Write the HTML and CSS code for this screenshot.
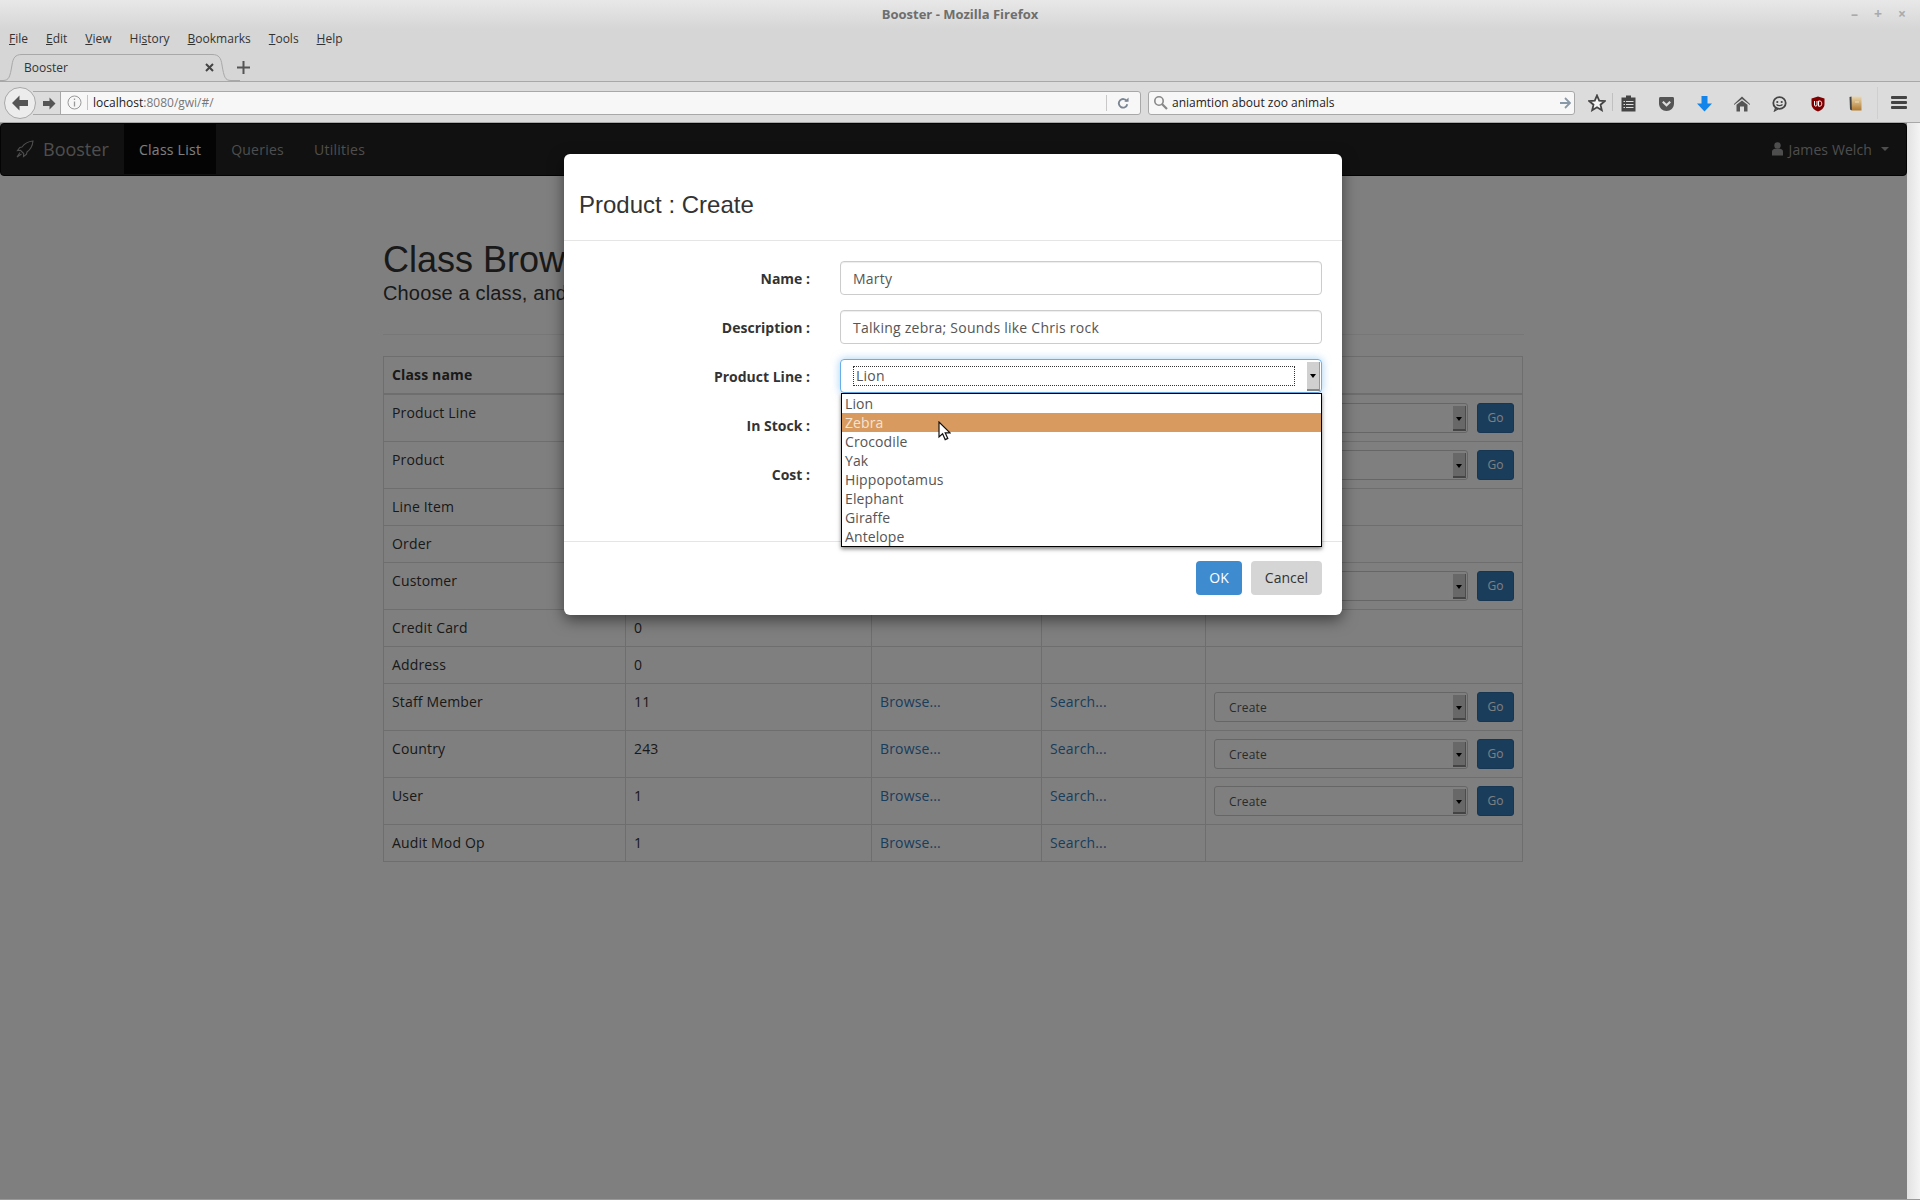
FILE: index.html
```html
<!DOCTYPE html>
<html>
<head>
  <title>Booster - Mozilla Firefox</title>
  <link rel="stylesheet" href="styles.css">
</head>
<body>

  <div class="titlebar">
    <span class="title">Booster - Mozilla Firefox</span>
    <div class="winbtns"><span>&#8211;</span><span>+</span><span>&#215;</span></div>
  </div>

  <div class="menubar">
    <span><u>F</u>ile</span>
    <span><u>E</u>dit</span>
    <span><u>V</u>iew</span>
    <span>Hi<u>s</u>tory</span>
    <span><u>B</u>ookmarks</span>
    <span><u>T</u>ools</span>
    <span><u>H</u>elp</span>
  </div>

  <div class="tabbar">
    <div class="tab">
      <svg class="tabshape" width="240" height="29" viewBox="0 0 240 29"><path d="M0 27.5H3C9 27.5 10 24 12 12C13 5 15 1.5 22 1.5H212C219 1.5 221 5 222 12C224 24 225 27.5 231 27.5H240" fill="none" stroke="#a8a8a8" stroke-width="1"/></svg>
      <span class="tabtext">Booster</span>
      <svg class="tabclose" width="9" height="9" viewBox="0 0 9 9"><path d="M1 1L8 8M8 1L1 8" stroke="#444" stroke-width="2"/></svg>
    </div>
    <svg class="newtab" width="13" height="13" viewBox="0 0 13 13"><path d="M6.5 0V13M0 6.5H13" stroke="#555" stroke-width="2"/></svg>
  </div>

  <div class="toolbar">
    <div class="backbtn"><svg width="20" height="18" viewBox="0 0 20 18"><path d="M9.5 1.5L2 9L9.5 16.5V12H18V6H9.5Z" fill="#555"/></svg></div>
    <div class="fwdbtn"><svg width="14" height="13" viewBox="0 0 14 13"><path d="M7.5 0.5L13.5 6.5L7.5 12.5V9H1V4H7.5Z" fill="#555"/></svg></div>
    <div class="urlbar">
      <svg class="infoicon" width="15" height="15" viewBox="0 0 15 15"><circle cx="7.5" cy="7.5" r="6.5" fill="none" stroke="#999"/><path d="M7.5 6.5V11.5M7.5 3.5V5" stroke="#999" stroke-width="1.3"/></svg>
      <span class="urlsep"></span>
      <span class="url">localhost<span class="urlrest">:8080/gwi/#/</span></span>
      <span class="urlsep2"></span>
      <svg class="reload" width="12" height="12" viewBox="0 0 14 14"><path d="M11.5 5A5 5 0 1 0 12 8.5" fill="none" stroke="#7a8694" stroke-width="2.2"/><path d="M8.5 5.5H13.5V0.5Z" fill="#7a8694"/></svg>
    </div>
    <div class="searchbar">
      <svg width="15" height="15" viewBox="0 0 15 15"><circle cx="6" cy="6" r="4.2" fill="none" stroke="#888" stroke-width="1.6"/><path d="M9 9L14 14" stroke="#888" stroke-width="2.2"/></svg>
      <span class="searchtext">aniamtion about zoo animals</span>
      <svg width="12" height="12" viewBox="0 0 12 12"><path d="M6 1L11 6L6 11M11 6H1" fill="none" stroke="#8a99a8" stroke-width="1.8"/></svg>
    </div>
    <div class="tbicons">
      <svg class="ic-star" width="18" height="18" viewBox="0 0 18 18"><path d="M9 1.5L11.2 6.6L16.7 7.1L12.5 10.7L13.8 16.2L9 13.3L4.2 16.2L5.5 10.7L1.3 7.1L6.8 6.6Z" fill="#f4f4f4" stroke="#444" stroke-width="1.8"/></svg>
      <span class="tbsep"></span>
      <svg class="ic-list" width="15" height="17" viewBox="0 0 15 17"><path d="M5 0.5H10V2.5H14.5V16.5H0.5V2.5H5Z" fill="#444"/><path d="M5 6.5H12.5M5 9.5H12.5M5 12.5H12.5M2.5 6.5H4M2.5 9.5H4M2.5 12.5H4" stroke="#ddd" stroke-width="1.2"/></svg>
      <svg class="ic-pocket" width="17" height="16" viewBox="0 0 17 16"><path d="M2.5 1H14.5C15.5 1 16 1.6 16 2.5V7.5C16 12 12.5 15 8.5 15C4.5 15 1 12 1 7.5V2.5C1 1.6 1.5 1 2.5 1Z" fill="#555"/><path d="M4.8 5.8L8.5 9.3L12.2 5.8" fill="none" stroke="#ddd" stroke-width="2.2"/></svg>
      <svg class="ic-down" width="15" height="17" viewBox="0 0 15 17"><path d="M4.5 0H10.5V7.5H15L7.5 15.5L0 7.5H4.5Z" fill="#1284ea"/></svg>
      <svg class="ic-home" width="16" height="16" viewBox="0 0 16 16"><path d="M8 0.5L16 8V9L8 3L0 9V8Z" fill="#555"/><path d="M8 4.5L13.5 8.8V15.5H10V10.5H6V15.5H2.5V8.8Z" fill="#555"/></svg>
      <svg class="ic-chat" width="15" height="16" viewBox="0 0 15 16"><ellipse cx="7.5" cy="7" rx="6.2" ry="5.8" fill="#ddd" stroke="#444" stroke-width="1.8"/><circle cx="5.3" cy="6" r="1.1" fill="#444"/><circle cx="9.7" cy="6" r="1.1" fill="#444"/><path d="M4.5 8.5C6 10 9 10 10.5 8.5M3.5 12L2.5 15L6 13" fill="none" stroke="#444" stroke-width="1.2"/></svg>
      <svg class="ic-ublock" width="14" height="16" viewBox="0 0 14 16"><path d="M7 0.5L13.5 2.5V8C13.5 12 10 14.5 7 15.5C4 14.5 0.5 12 0.5 8V2.5Z" fill="#800000"/><path d="M3.5 5V9C3.5 10.5 6 10.5 6 9V5M7.5 5V10.2H9C11.3 10.2 11.3 5 9 5H7.5Z" fill="none" stroke="#fff" stroke-width="1"/></svg>
      <svg class="ic-book" width="13" height="15" viewBox="0 0 13 15"><defs><linearGradient id="bookfill" x1="0" y1="0" x2="0" y2="1"><stop offset="0" stop-color="#e8d8b0"/><stop offset="1" stop-color="#b07a30"/></linearGradient></defs><path d="M2.5 0.5H12.5V14.5H3Z" fill="url(#bookfill)"/><path d="M0.5 1L2.5 0.5L3 14.5L1 13.5Z" fill="#444"/><path d="M7 5V7M9 5V7" stroke="#f4e8c8" stroke-width="0.8"/></svg>
      <span class="tbsep2"></span>
      <div class="hamburger"><i></i><i></i><i></i></div>
    </div>
  </div>

  <div class="viewport">
    <div class="page">
      <nav class="navbar">
        <a class="brand">
          <svg width="18" height="18" viewBox="0 0 18 18"><path d="M17 1C12 1.5 8.5 3.5 6 7L3.8 7.5L1.5 10.5L4.5 10.3L7.7 13.5L7.5 16.5L10.5 14.2L11 12C14.5 9.5 16.5 6 17 1ZM4 12.5L1 17L5.5 14" fill="none" stroke="#9d9d9d" stroke-width="1.1"/></svg>
          Booster
        </a>
        <a class="navlink active">Class List</a>
        <a class="navlink">Queries</a>
        <a class="navlink">Utilities</a>
        <a class="navuser">
          <svg width="11" height="14" viewBox="0 0 11 14"><circle cx="5.5" cy="3.5" r="3.2" fill="#9d9d9d"/><path d="M0 13.5V9.5C0 7.5 2 7 3 6.8H8C9 7 11 7.5 11 9.5V13.5Z" fill="#9d9d9d"/></svg>
          James Welch <span class="caret"></span>
        </a>
      </nav>

      <div class="container">
        <div class="pagehead">
          <h1>Class Browser</h1>
          <p>Choose a class, and</p>
        </div>

        <table class="classes">
          <colgroup><col class="c1"><col class="c2"><col class="c3"><col class="c4"><col class="c5"></colgroup>
          <thead>
            <tr><th>Class name</th><th></th><th></th><th></th><th></th></tr>
          </thead>
          <tbody>
            <tr><td>Product Line</td><td></td><td></td><td></td><td><div class="actions"><div class="sel"><span class="selarrow"></span></div><div class="go">Go</div></div></td></tr>
            <tr><td>Product</td><td></td><td></td><td></td><td><div class="actions"><div class="sel"><span class="selarrow"></span></div><div class="go">Go</div></div></td></tr>
            <tr><td>Line Item</td><td></td><td></td><td></td><td></td></tr>
            <tr><td>Order</td><td></td><td></td><td></td><td></td></tr>
            <tr><td>Customer</td><td></td><td></td><td></td><td><div class="actions"><div class="sel"><span class="selarrow"></span></div><div class="go">Go</div></div></td></tr>
            <tr><td>Credit Card</td><td>0</td><td></td><td></td><td></td></tr>
            <tr><td>Address</td><td>0</td><td></td><td></td><td></td></tr>
            <tr><td>Staff Member</td><td>11</td><td><a>Browse...</a></td><td><a>Search...</a></td><td><div class="actions"><div class="sel">Create<span class="selarrow"></span></div><div class="go">Go</div></div></td></tr>
            <tr><td>Country</td><td>243</td><td><a>Browse...</a></td><td><a>Search...</a></td><td><div class="actions"><div class="sel">Create<span class="selarrow"></span></div><div class="go">Go</div></div></td></tr>
            <tr><td>User</td><td>1</td><td><a>Browse...</a></td><td><a>Search...</a></td><td><div class="actions"><div class="sel">Create<span class="selarrow"></span></div><div class="go">Go</div></div></td></tr>
            <tr><td>Audit Mod Op</td><td>1</td><td><a>Browse...</a></td><td><a>Search...</a></td><td></td></tr>
          </tbody>
        </table>
      </div>

      <div class="backdrop"></div>

      <div class="modal">
        <div class="modalhead"><h3>Product : Create</h3></div>
        <div class="modalbody">
          <div class="row"><label>Name :</label><div class="input">Marty</div></div>
          <div class="row"><label>Description :</label><div class="input">Talking zebra; Sounds like Chris rock</div></div>
          <div class="row">
            <label>Product Line :</label>
            <div class="input focused">
              <span class="focusbox">Lion</span>
              <span class="selarrow big"></span>
              <ul class="options">
                <li>Lion</li>
                <li class="hover">Zebra</li>
                <li>Crocodile</li>
                <li>Yak</li>
                <li>Hippopotamus</li>
                <li>Elephant</li>
                <li>Giraffe</li>
                <li>Antelope</li>
              </ul>
            </div>
          </div>
          <div class="row"><label>In Stock :</label></div>
          <div class="row"><label>Cost :</label></div>
        </div>
        <div class="modalfoot">
          <div class="btn ok">OK</div>
          <div class="btn cancel">Cancel</div>
        </div>
      </div>

      <svg class="pointer" width="13" height="20" viewBox="0 0 13 20"><path d="M1 1V16L4.6 12.8L7.2 18.6L9.8 17.4L7.2 11.8H12Z" fill="#fff" stroke="#111" stroke-width="1.2"/></svg>
    </div>
    <div class="scrollbar"></div>
  </div>

</body>
</html>
```

FILE: styles.css
```css
html, body { margin: 0; padding: 0; }
body {
  width: 1920px;
  height: 1200px;
  overflow: hidden;
  font-family: "Open Sans", sans-serif;
  font-size: 14px;
  color: #333;
  background: #d6d6d6;
  display: flex;
  flex-direction: column;
}

/* browser chrome */
.titlebar {
  height: 27px;
  padding-bottom: 2px;
  flex: none;
  background: linear-gradient(#e8e8e8, #d6d6d6);
  display: flex;
  align-items: center;
  justify-content: center;
  position: relative;
}
.title { font-size: 13px; font-weight: 700; color: #6e6e6e; }
.winbtns {
  position: absolute;
  right: 14px;
  top: 4px;
  display: flex;
  gap: 16px;
  color: #aaa;
  font-size: 14px;
  font-weight: 700;
}
.menubar {
  height: 18px;
  padding-bottom: 6px;
  flex: none;
  display: flex;
  align-items: center;
  padding-left: 9px;
  gap: 18px;
  font-size: 12px;
  color: #333;
}
.tabbar {
  height: 28px;
  flex: none;
  display: flex;
  align-items: center;
  border-bottom: 1px solid #a8a8a8;
}
.tab {
  position: relative;
  width: 231px;
  height: 28px;
  display: flex;
  align-items: center;
  justify-content: space-between;
  padding: 0 17px 0 24px;
  box-sizing: border-box;
  font-size: 12px;
  background: #d6d6d6;
  z-index: 1;
}
.tabshape { position: absolute; left: 0; top: 0; }
.tabtext, .tabclose { position: relative; }
.newtab { margin-left: 6px; }
.toolbar {
  height: 39px;
  padding-top: 1px;
  flex: none;
  background: #dcdcdc;
  border-bottom: 1px solid #a8a8a8;
  display: flex;
  align-items: center;
  padding-left: 5px;
  position: relative;
}
.backbtn {
  width: 32px;
  height: 32px;
  border-radius: 50%;
  border: 1px solid #a8a8a8;
  background: #ececec;
  display: flex;
  align-items: center;
  justify-content: center;
  position: absolute;
  left: 4px;
  top: 5px;
  box-sizing: border-box;
  z-index: 1;
}
.fwdbtn {
  position: absolute;
  left: 33px;
  top: 9px;
  width: 28px;
  height: 24px;
  display: flex;
  align-items: center;
  justify-content: center;
  padding-left: 3px;
  box-sizing: border-box;
  border-top: 1px solid #a8a8a8;
  border-bottom: 1px solid #a8a8a8;
}
.urlbar, .searchbar {
  height: 24px;
  box-sizing: border-box;
  border: 1px solid #a8a8a8;
  background: #f7f7f7;
  display: flex;
  align-items: center;
  font-size: 12px;
  color: #222;
}
.urlbar {
  margin-left: 55px;
  width: 1081px;
  padding: 0 11px 0 6px;
  border-radius: 0 3px 3px 0;
  flex: none;
}
.infoicon { flex: none; }
.urlsep { width: 1px; height: 15px; background: #c4c4c4; margin: 0 5px; }
.url { flex: 1; }
.urlrest { color: #777; }
.urlsep2 { width: 1px; height: 16px; background: #c8c8c8; margin-right: 10px; }
.searchbar {
  margin-left: 7px;
  width: 427px;
  padding: 0 3px 0 4px;
  border-radius: 3px;
  flex: none;
}
.searchtext { flex: 1; margin-left: 4px; }
.tbicons {
  flex: 1;
  display: flex;
  align-items: center;
  position: relative;
  height: 30px;
}
.tbicons svg { position: absolute; top: 8px; }
.tbicons .ic-star { left: 13px; top: 6px; }
.tbsep { position: absolute; left: 37px; top: 5px; width: 1px; height: 18px; background: #c0c0c0; }
.tbicons .ic-list { left: 46px; top: 7px; }
.ic-pocket { left: 83px; }
.ic-down { left: 122px; }
.ic-home { left: 159px; }
.ic-chat { left: 197px; }
.ic-ublock { left: 236px; }
.ic-book { left: 274px; }
.tbsep2 { position: absolute; left: 302px; top: -1px; width: 1px; height: 32px; background: #cfcfcf; }
.hamburger {
  position: absolute;
  left: 316px;
  top: 8px;
  display: flex;
  flex-direction: column;
  gap: 2px;
}
.hamburger i { display: block; width: 16px; height: 3px; background: #444; border-radius: 1px; }

/* the page */
.viewport {
  flex: 1;
  display: flex;
  min-height: 0;
  border-bottom: 1px solid #999;
}
.page {
  flex: 1;
  position: relative;
  background: #fff;
  overflow: hidden;
}
.scrollbar {
  width: 13px;
  flex: none;
  background: linear-gradient(90deg, #e2e2e2, #f4f4f4);
}
.navbar {
  height: 53px;
  padding-bottom: 1px;
  box-sizing: border-box;
  background: #222;
  border: 1px solid #080808;
  border-radius: 4px;
  display: flex;
  align-items: stretch;
  position: relative;
}
.brand {
  width: 123px;
  box-sizing: border-box;
  padding-left: 15px;
  display: flex;
  align-items: center;
  gap: 9px;
  font-size: 18px;
  color: #9d9d9d;
}
.navlink {
  padding: 0 15px;
  display: flex;
  align-items: center;
  color: #9d9d9d;
  letter-spacing: 0.25px;
}
.navlink.active { background: #080808; color: #fff; }
.navuser {
  margin-left: auto;
  padding-right: 17px;
  display: flex;
  align-items: center;
  gap: 6px;
  color: #9d9d9d;
  letter-spacing: 0.1px;
}
.caret {
  width: 0;
  height: 0;
  margin-left: 3px;
  border-top: 4px solid #9d9d9d;
  border-left: 4px solid transparent;
  border-right: 4px solid transparent;
}
.container { width: 1141px; margin: 0 auto; }
.pagehead {
  margin-top: 63px;
  padding-bottom: 30px;
  border-bottom: 1px solid #eee;
  margin-bottom: 21px;
  font-family: "Liberation Sans", sans-serif;
}
.pagehead h1 { margin: 0; font-size: 36px; font-weight: 500; line-height: 42px; }
.pagehead p { margin: 1px 0 0; font-size: 20px; line-height: 22px; letter-spacing: 0.15px; }

.classes {
  width: 1140px;
  table-layout: fixed;
  border-collapse: collapse;
  border: 1px solid #ddd;
}
.c1 { width: 242px; }
.c2 { width: 246px; }
.c3 { width: 170px; }
.c4 { width: 164px; }
.classes th, .classes td {
  height: 20px;
  padding: 8px;
  border: 1px solid #ddd;
  line-height: 20px;
  vertical-align: top;
  text-align: left;
  letter-spacing: 0.15px;
}
.classes th { border-bottom-width: 2px; font-weight: 700; }
.classes a { color: #337ab7; }
.actions { display: flex; gap: 9px; }
.sel {
  flex: 1;
  height: 30px;
  box-sizing: border-box;
  border: 1px solid #ccc;
  border-radius: 3px;
  font-size: 12px;
  color: #555;
  padding: 0 14px;
  line-height: 30px;
  position: relative;
}
.selarrow {
  position: absolute;
  right: 1px;
  top: 2px;
  bottom: 1px;
  width: 13px;
  background: #d0d0d0;
  border-right: 1px solid #999;
  border-bottom: 2px solid #888;
  box-sizing: border-box;
}
.selarrow::after {
  content: "";
  position: absolute;
  left: 3px;
  top: 11px;
  border-top: 4px solid #000;
  border-left: 3px solid transparent;
  border-right: 3px solid transparent;
}
.go {
  width: 37px;
  height: 30px;
  background: #337ab7;
  border: 1px solid #2e6da4;
  border-radius: 3px;
  box-sizing: border-box;
  color: #fff;
  font-size: 12px;
  line-height: 28px;
  text-align: center;
}

.backdrop {
  position: absolute;
  left: 0;
  right: 0;
  top: 0;
  bottom: 0;
  background: rgba(0, 0, 0, 0.5);
}
.pointer { position: absolute; left: 938px; top: 298px; z-index: 3; }

/* the dialog */
.modal {
  position: absolute;
  left: 564px;
  top: 31px;
  width: 778px;
  height: 461px;
  background: #fff;
  border-radius: 6px;
  box-shadow: 0 5px 15px rgba(0, 0, 0, 0.5);
  display: flex;
  flex-direction: column;
}
.modalhead {
  height: 87px;
  box-sizing: border-box;
  border-bottom: 1px solid #e5e5e5;
  padding: 34px 15px 0;
}
.modalhead h3 {
  margin: 0;
  font-family: "Liberation Sans", sans-serif;
  font-size: 24px;
  font-weight: 500;
  line-height: 34px;
}
.modalbody {
  flex: 1;
  padding: 20px 20px 0 0;
  display: flex;
  flex-direction: column;
  gap: 15px;
}
.row {
  display: flex;
  height: 34px;
  align-items: center;
}
.row label {
  width: 246px;
  text-align: right;
  font-weight: 700;
  margin-right: 30px;
}
.input {
  flex: 1;
  height: 34px;
  box-sizing: border-box;
  border: 1px solid #ccc;
  border-radius: 4px;
  padding: 0 12px;
  line-height: 33px;
  color: #555;
  letter-spacing: 0.25px;
  box-shadow: inset 0 1px 1px rgba(0, 0, 0, 0.075);
  position: relative;
}
.input.focused {
  border-color: #66afe9;
  box-shadow: 0 0 8px rgba(102, 175, 233, 0.6);
}
.focusbox {
  position: absolute;
  left: 12px;
  top: 6px;
  width: 438px;
  height: 18px;
  border: 1px dotted #333;
  line-height: 18px;
  padding-left: 2px;
}
.selarrow.big::after { top: 12px; }
.options {
  position: absolute;
  left: 0;
  right: -1px;
  top: 33px;
  margin: 0;
  padding: 0;
  list-style: none;
  background: #fff;
  border: 1px solid #000;
  box-shadow: 0 2px 4px rgba(0, 0, 0, 0.5);
  letter-spacing: 0.1px;
  z-index: 2;
}
.options li {
  height: 19px;
  line-height: 19px;
  padding-left: 3px;
  color: #555;
}
.options li.hover { background: #d99a5f; color: #f3e4d4; }
.modalfoot {
  height: 74px;
  box-sizing: border-box;
  border-top: 1px solid #e5e5e5;
  padding: 19px 20px 0 0;
  display: flex;
  justify-content: flex-end;
  gap: 9px;
}
.btn {
  height: 34px;
  box-sizing: border-box;
  border-radius: 4px;
  line-height: 34px;
  text-align: center;
}
.btn.ok { width: 46px; background: #3f8bcf; color: #fff; }
.btn.cancel { width: 71px; background: #d5d5d5; color: #333; }
```
